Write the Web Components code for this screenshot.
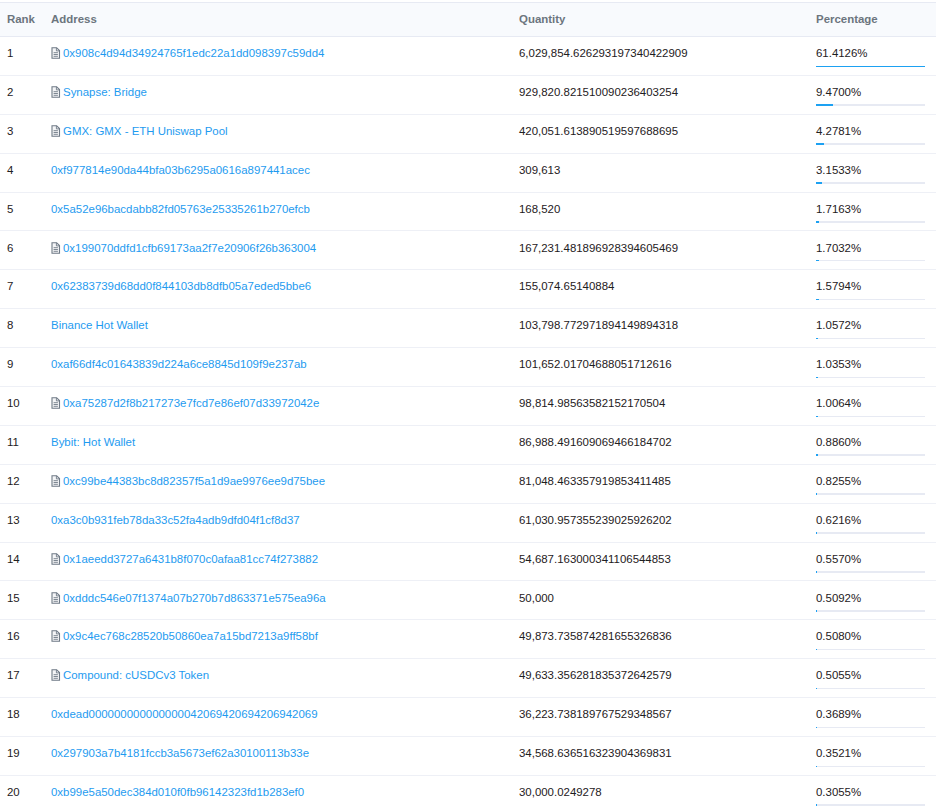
<!DOCTYPE html>
<html>
<head>
<meta charset="utf-8">
<title>Token holders</title>
<style>
  html, body { margin: 0; padding: 0; background: #fff; }
  body { font-family: "Liberation Sans", Arial, sans-serif; font-size: 11.44px; color: #1e2022; }
</style>
</head>
<body>
<holders-table></holders-table>
<script>
const rows = [
  ['0x908c4d94d34924765f1edc22a1dd098397c59dd4', 1, '6,029,854.626293197340422909', 61.4126],
  ['Synapse: Bridge', 1, '929,820.821510090236403254', 9.47],
  ['GMX: GMX - ETH Uniswap Pool', 1, '420,051.613890519597688695', 4.2781],
  ['0xf977814e90da44bfa03b6295a0616a897441acec', 0, '309,613', 3.1533],
  ['0x5a52e96bacdabb82fd05763e25335261b270efcb', 0, '168,520', 1.7163],
  ['0x199070ddfd1cfb69173aa2f7e20906f26b363004', 1, '167,231.481896928394605469', 1.7032],
  ['0x62383739d68dd0f844103db8dfb05a7eded5bbe6', 0, '155,074.65140884', 1.5794],
  ['Binance Hot Wallet', 0, '103,798.772971894149894318', 1.0572],
  ['0xaf66df4c01643839d224a6ce8845d109f9e237ab', 0, '101,652.01704688051712616', 1.0353],
  ['0xa75287d2f8b217273e7fcd7e86ef07d33972042e', 1, '98,814.98563582152170504', 1.0064],
  ['Bybit: Hot Wallet', 0, '86,988.491609069466184702', 0.886],
  ['0xc99be44383bc8d82357f5a1d9ae9976ee9d75bee', 1, '81,048.463357919853411485', 0.8255],
  ['0xa3c0b931feb78da33c52fa4adb9dfd04f1cf8d37', 0, '61,030.957355239025926202', 0.6216],
  ['0x1aeedd3727a6431b8f070c0afaa81cc74f273882', 1, '54,687.163000341106544853', 0.557],
  ['0xdddc546e07f1374a07b270b7d863371e575ea96a', 1, '50,000', 0.5092],
  ['0x9c4ec768c28520b50860ea7a15bd7213a9ff58bf', 1, '49,873.735874281655326836', 0.508],
  ['Compound: cUSDCv3 Token', 1, '49,633.356281835372642579', 0.5055],
  ['0xdead000000000000000042069420694206942069', 0, '36,223.738189767529348567', 0.3689],
  ['0x297903a7b4181fccb3a5673ef62a30100113b33e', 0, '34,568.636516323904369831', 0.3521],
  ['0xb99e5a50dec384d010f0fb96142323fd1b283ef0', 0, '30,000.0249278', 0.3055]
]

// columns are shared by the header and every row
const columns = 'display: grid; grid-template-columns: 44px 468px 297px 109px; padding-left: 7px;'

class PctBar extends HTMLElement {
  connectedCallback() {
    const root = this.attachShadow({ mode: 'open' })
    // bars are scaled against the largest holder, not against 100%
    const value = (Number.parseFloat(this.getAttribute('value')) || 0) / rows[0][3] * 100
    root.innerHTML = `
      <style>
        :host { display: block; height: 1.5px; background: #e7eaf3; overflow: hidden; }
        div { height: 100%; background: #1da1f2; }
      </style>
      <div style="width: ${value}%"></div>`
  }
}
customElements.define('pct-bar', PctBar)

class HolderRow extends HTMLElement {
  connectedCallback() {
    const root = this.attachShadow({ mode: 'open' })
    const contract = this.hasAttribute('contract')
    const value = this.getAttribute('value')
    root.innerHTML = `
      <style>
        :host { ${columns} height: 38.891px; box-sizing: border-box; border-bottom: 1px solid #eef0f6; line-height: 13px; }
        :host(:last-child) { border-bottom: 0; }
        .cell { padding-top: 10.1px; white-space: nowrap; }
        .addr { display: flex; align-items: flex-start; color: #1e9bf0; }
        svg { width: 10px; height: 12px; margin: 0 2px 0 0; flex: none; }
        pct-bar { margin-top: 5.45px; }
      </style>
      <div class="cell">${this.getAttribute('rank')}</div>
      <div class="cell addr">
        ${contract ? `<svg viewBox="0 0 10 12"><path d="M1 .7h4.6L8.5 3.6V11.3H1z" fill="#f4f5f7" stroke="#6f7a86" stroke-width="1.1"/><path d="M5.4 .9V3.9H8.3M2.6 5.7H6.9M2.6 7.5H6.9M2.6 9.3H6.9" fill="none" stroke="#6f7a86" stroke-width=".9"/></svg>` : ''}
        <slot></slot>
      </div>
      <div class="cell">${this.getAttribute('qty')}</div>
      <div class="cell">
        ${value}%
        <pct-bar value="${Number.parseFloat(value)}"></pct-bar>
      </div>`
  }
}
customElements.define('holder-row', HolderRow)

class HoldersTable extends HTMLElement {
  connectedCallback() {
    const root = this.attachShadow({ mode: 'open' })
    const body = rows.map((r, i) => `
      <holder-row rank="${i + 1}" qty="${r[2]}" value="${r[3].toFixed(4)}"${r[1] ? ' contract' : ''}>${r[0]}</holder-row>`).join('')
    root.innerHTML = `
      <style>
        :host { display: block; padding-top: 2px; }
        .head {
          ${columns}
          height: 35px; box-sizing: border-box; align-items: center; padding-bottom: 1px;
          background: #f8fafd; border-top: 1px solid #e7eaf3; border-bottom: 1px solid #e7eaf3;
          color: #6c757e; font-weight: bold;
        }
      </style>
      <div class="head"><div>Rank</div><div>Address</div><div>Quantity</div><div>Percentage</div></div>
      ${body}`
  }
}
customElements.define('holders-table', HoldersTable)
</script>
</body>
</html>
